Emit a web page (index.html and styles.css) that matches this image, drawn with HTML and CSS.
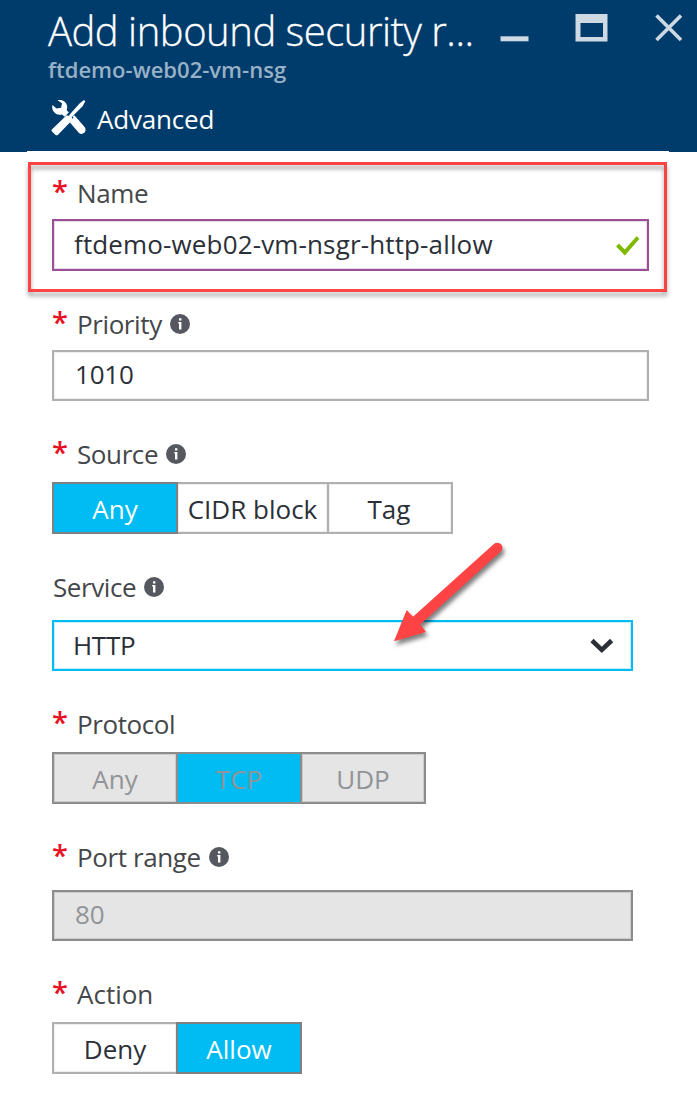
FILE: index.html
```html
<!DOCTYPE html>
<html lang="en">
<head>
<meta charset="utf-8">
<title>Add inbound security rule</title>
<link rel="stylesheet" href="styles.css">
</head>
<body>
<svg width="0" height="0" class="defs" aria-hidden="true">
  <symbol id="info" viewBox="0 0 20 20">
    <circle cx="10" cy="10" r="10" fill="#55595f"/>
    <path d="M9 4.2h2.4v2.2H9zM8.2 8h3.2v7.5H9V9.4h-.8z" fill="#fff"/>
  </symbol>
</svg>
<main class="blade">
  <header class="header">
    <div class="titlebar">
      <h1 class="title">Add inbound security r...</h1>
      <div class="window">
        <svg width="28" height="26" viewBox="0 0 28 26"><path d="M-.5 22.300h28v5h-28z" fill="#ced9e3"/></svg>
        <svg width="32" height="28" viewBox="0 0 32 28"><path fill-rule="evenodd" d="M-.5 0h32v27.500h-32zM4.500 9v14H27V9z" fill="#ced9e3"/></svg>
        <svg width="28" height="28" viewBox="0 0 28 28"><path d="M1.500 1.500l24.500 24.500M26 1.500L1.500 26" stroke="#ced9e3" stroke-width="3.600"/></svg>
      </div>
    </div>
    <div class="subtitle">ftdemo-web02-vm-nsg</div>
    <div class="command">
      <svg width="36" height="37" viewBox="0 0 36 37" fill="#fff">
        <path d="M6.500 1.300C11 .1 15.800 2.800 16.200 7.600c.1 1.400-.2 2.500-.6 3.500l2.200 2.400-4.200 4.200-2.600-2.300C6.300 16.900 1.300 13.500 1.200 8.300c0-.9.1-1.600.3-2.300l4 3.600 4.600-.8.900-4.500z"/>
        <path d="M33 1l1.300 1.200-2.700 5-10 10-1 .5 1.200 2.800L7 35.800c-.8.8-2 .6-2.700-.1L1 32.500c-.7-.7-.6-1.500.1-2.200l14.500-14 2.500.8.600-1.500L28.800 4.200z"/>
        <path d="M23.600 16.600l10 11.500c1.500 1.700 1.200 4.200-.3 5.700-1.600 1.500-4 1.600-5.500 0L18.500 23l4-4.200-1-1 1.100-1.200z"/>
      </svg>
      <span>Advanced</span>
    </div>
  </header>
  <form class="form">
    <section class="group">
      <div class="label"><b>*</b><span>Name</span></div>
      <div class="field valid"><span>ftdemo-web02-vm-nsgr-http-allow</span>
        <svg class="check" width="24" height="20" viewBox="0 0 24 20"><path d="M1.500 9l7.300 7.500L22 1.500" fill="none" stroke="#7fba00" stroke-width="4"/></svg>
      </div>
    </section>
    <section class="group">
      <div class="label"><b>*</b><span>Priority</span><svg class="info"><use href="#info"/></svg></div>
      <div class="field number"><span>1010</span></div>
    </section>
    <section class="group mid">
      <div class="label"><b>*</b><span>Source</span><svg class="info"><use href="#info"/></svg></div>
      <div class="options"><span class="option on">Any</span><span class="option wide">CIDR block</span><span class="option tag">Tag</span></div>
    </section>
    <section class="group low">
      <div class="label service"><span>Service</span><svg class="info"><use href="#info"/></svg></div>
      <div class="field select"><span>HTTP</span>
        <svg width="24" height="16" viewBox="0 0 24 16"><path d="M2 2.500l9.800 9.300L21.600 2.500" fill="none" stroke="#2b3038" stroke-width="4.600"/></svg>
      </div>
    </section>
    <section class="group mid">
      <div class="label"><b>*</b><span>Protocol</span></div>
      <div class="options disabled"><span class="option">Any</span><span class="option on">TCP</span><span class="option">UDP</span></div>
    </section>
    <section class="group low">
      <div class="label"><b>*</b><span>Port range</span><svg class="info"><use href="#info"/></svg></div>
      <div class="field number off"><span>80</span></div>
    </section>
    <section class="group mid">
      <div class="label action"><b>*</b><span>Action</span></div>
      <div class="options"><span class="option">Deny</span><span class="option on">Allow</span></div>
    </section>
  </form>
  <div class="highlight"></div>
  <svg class="arrow" width="130" height="120" viewBox="384 535 130 120"><path d="M394 641.200L406.700 610l6.300 6.700 80.900-72.700a5 5 0 0 1 6.800 7.500L420.300 624.500l5.700 7.500z" fill="#fd4343"/></svg>
</main>
</body>
</html>
```

FILE: styles.css
```css
* { box-sizing: border-box; }
body {
  margin: 0;
  background: #fff;
  font-family: "Open Sans", "Noto Sans", sans-serif;
  font-size: 26px;
  line-height: 36px;
  color: #2b3038;
  white-space: nowrap;
}
.defs { position: absolute; }
.blade { position: relative; width: 697px; height: 1093px; overflow: hidden; }

.header { height: 152px; padding-left: 48px; background: #003c6b; color: #fff; }
.titlebar { display: flex; height: 56px; }
.title {
  margin: 0;
  padding-top: 6px;
  width: 453px;
  font-size: 40px;
  line-height: 50px;
  font-weight: 300;
  letter-spacing: -0.48px;
  -webkit-text-stroke: 0.3px #fff;
}
.window { display: flex; gap: 47px; padding-top: 14px; }
.window svg { overflow: visible; }
.subtitle { height: 26px; line-height: 27px; font-size: 22px; font-weight: 600; color: #98b1c6; letter-spacing: 0.02px; }
.command { display: flex; align-items: flex-start; gap: 10px; padding: 17px 0 0 3px; }
.command span { margin-top: 2px; letter-spacing: -0.2px; }

.form {
  display: flex;
  flex-direction: column;
  gap: 35px;
  width: 642px;
  margin: -1px 0 0 27px;
  padding: 24px 0 0 25px;
  background: #fff;
}
.label { display: flex; height: 44px; color: #44474a; letter-spacing: -0.4px; }
.mid .label { height: 46px; }
.low .label { height: 51px; }
.action { letter-spacing: 0; }
.service { padding-left: 1px; }
.label b { width: 25px; color: #e81123; font-size: 29px; font-weight: 600; line-height: 31px; }
.info { width: 20px; height: 20px; margin: 8px 0 0 8px; }
.field {
  display: flex;
  align-items: center;
  justify-content: space-between;
  width: 597px;
  height: 51px;
  padding: 0 7px 2px 21px;
  border: 2px solid #b0b0b0;
  box-shadow: inset 0 0 0 1px #eee;
}
.number { padding-bottom: 4px; letter-spacing: -0.2px; }
.valid { height: 52px; padding-left: 20px; border-color: #9b4f96; box-shadow: inset 0 0 0 1px #ead9e9; letter-spacing: 0.14px; }
.select { width: 581px; padding: 0 17px 0 19px; border-color: #00bcf2; box-shadow: inset 0 0 0 1px #c5effb; letter-spacing: -0.3px; }
.select span { margin-top: -2px; }
.off { width: 581px; background: #e5e5e5; border-color: #8c8c8c; box-shadow: inset 0 0 0 1px #ccc; color: #919497; }
.check { margin-top: 4px; }

.options { display: flex; }
.option {
  width: 126px;
  height: 52px;
  margin-right: -2px;
  border: 2px solid #b0b0b0;
  box-shadow: inset 0 0 0 1px #eee;
  line-height: 51px;
  text-align: center;
}
.wide { width: 153px; }
.tag { padding-right: 2px; }
.on { position: relative; background: #00bcf2; border-color: #808080; box-shadow: none; color: #fff; }
.disabled .option { border-color: #8c8c8c; color: #919497; }
.disabled .option:not(.on) { background: #e5e5e5; box-shadow: inset 0 0 0 1px #ccc; }

.highlight {
  position: absolute;
  left: 28px;
  top: 162px;
  width: 639px;
  height: 130px;
  border: 3px solid #fd4343;
  filter: drop-shadow(0 4px 2px rgba(0, 0, 0, .36));
}
.arrow { position: absolute; left: 384px; top: 535px; filter: drop-shadow(2px 4px 2px rgba(0, 0, 0, .5)); }
```
